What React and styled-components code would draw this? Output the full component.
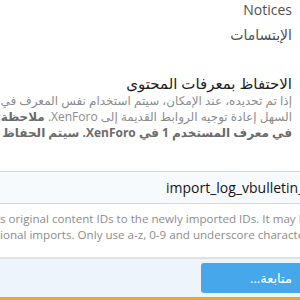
import React from "react";
import styled, { createGlobalStyle } from "styled-components";

const Global = createGlobalStyle`
  html, body { margin: 0; padding: 0; background: #fff; }
  body { font-family: "Segoe UI", "Open Sans", "DejaVu Sans", sans-serif; }
`;

const Frame = styled.div`
  width: 300px;
  height: 300px;
  overflow: hidden;
  background: #fff;
  display: flex;
  flex-direction: column;
`;

const Rtl = styled.div`
  direction: rtl;
  padding-right: 8px;
  display: flex;
  flex-direction: column;
`;

const OptionItem = styled.div`
  font-size: 14px;
  line-height: 20px;
  color: #505050;
  white-space: nowrap;
  height: ${(p) => p.$h}px;
`;

const Section = styled.div`
  margin-top: 28px;
  display: flex;
  flex-direction: column;
`;

const Heading = styled.div`
  font-size: 15px;
  line-height: 20px;
  color: #1d1d1d;
  white-space: nowrap;
`;

const ExplainLine = styled.div`
  font-size: 12px;
  line-height: 16px;
  white-space: nowrap;
  color: ${(p) => (p.$bold ? "#6b6b6b" : "#8c8c8c")};
  font-weight: ${(p) => (p.$bold ? 700 : 400)};
  b { color: #6b6b6b; font-weight: 700; }
`;

const InputBox = styled.div`
  flex: none;
  margin-top: 30px;
  height: 31px;
  border-top: 1px solid #d8d8d8;
  border-bottom: 1px solid #d8d8d8;
  background: #f7fafd;
  padding-left: 166px;
  display: flex;
  align-items: center;
  overflow: hidden;
  white-space: nowrap;
  font-size: 14px;
  color: #141414;
`;

const Hint = styled.div`
  margin-top: 7px;
  display: flex;
  flex-direction: column;
`;

const HintLine = styled.div`
  font-size: 11.6px;
  line-height: 16px;
  color: #8c8c8c;
  white-space: nowrap;
  overflow: hidden;
`;

const Footer = styled.div`
  flex: none;
  margin-top: 14px;
  border-top: 2px solid #e0e3e6;
  background: #edf4fc;
  height: 38px;
  border-bottom: 3px solid #f0a81c;
  display: flex;
  align-items: center;
  padding-left: 201px;
`;

const Button = styled.button`
  flex: none;
  width: 112px;
  height: 30px;
  border: none;
  border-radius: 3px;
  background: #47a7eb;
  color: #fff;
  font-family: inherit;
  font-size: 13px;
  direction: rtl;
  padding: 0 0 0 28px;
  text-align: center;
`;

export default function App() {
  return (
    <>
      <Global />
      <Frame>
        <Rtl>
          <OptionItem $h={25}>Notices</OptionItem>
          <OptionItem $h={20}>الإبتسامات</OptionItem>
          <Section>
            <Heading>الاحتفاظ بمعرفات المحتوى</Heading>
            <ExplainLine>إذا تم تحديده، عند الإمكان، سيتم استخدام نفس المعرف في XenForo كما في المصدر.</ExplainLine>
            <ExplainLine>
              السهل إعادة توجيه الروابط القديمة إلى XenForo. <b>ملاحظة: المستخدم المستورد</b>
            </ExplainLine>
            <ExplainLine $bold>في معرف المستخدم 1 في XenForo. سيتم الحفاظ على المعرفات الأخرى.</ExplainLine>
          </Section>
        </Rtl>
        <InputBox>import_log_vbulletin_1</InputBox>
        <Hint>
          <HintLine>s original content IDs to the newly imported IDs. It may be used</HintLine>
          <HintLine>ional imports. Only use a-z, 0-9 and underscore characters.</HintLine>
        </Hint>
        <Footer>
          <Button>متابعة...</Button>
        </Footer>
      </Frame>
    </>
  );
}
